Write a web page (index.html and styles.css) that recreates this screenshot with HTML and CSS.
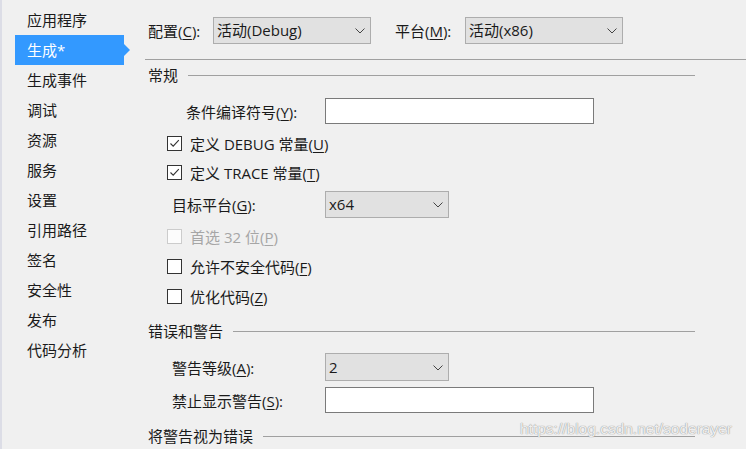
FILE: index.html
```html
<!DOCTYPE html>
<html>
<head>
<meta charset="utf-8">
<link rel="stylesheet" href="styles.css">
</head>
<body>
<div class="page">
  <nav class="side">
    <div class="item">应用程序</div>
    <div class="item sel">生成*</div>
    <div class="item">生成事件</div>
    <div class="item">调试</div>
    <div class="item">资源</div>
    <div class="item">服务</div>
    <div class="item">设置</div>
    <div class="item">引用路径</div>
    <div class="item">签名</div>
    <div class="item">安全性</div>
    <div class="item">发布</div>
    <div class="item">代码分析</div>
  </nav>
  <main class="main">
    <div class="toprow">
      <span class="lbl">配置(<u>C</u>):</span>
      <div class="combo wide"><span>活动(Debug)</span><svg class="chev" width="10" height="6" viewBox="0 0 10 6"><path d="M0.5 0.5 L5 5 L9.5 0.5" fill="none" stroke="#444" stroke-width="1"/></svg></div>
      <span class="lbl lbl2">平台(<u>M</u>):</span>
      <div class="combo wide"><span>活动(x86)</span><svg class="chev" width="10" height="6" viewBox="0 0 10 6"><path d="M0.5 0.5 L5 5 L9.5 0.5" fill="none" stroke="#444" stroke-width="1"/></svg></div>
    </div>
    <div class="sep"></div>

    <div class="hdr h1"><span>常规</span><i></i></div>

    <div class="row r-sym">
      <span class="flbl ind">条件编译符号(<u>Y</u>):</span>
      <div class="tbox"></div>
    </div>
    <div class="row chk r-debug">
      <span class="cb on"><svg width="13" height="13" viewBox="0 0 13 13"><path d="M2.5 6.5 L5.2 9.2 L10.8 3.2" fill="none" stroke="#333" stroke-width="1.1"/></svg></span>
      <span>定义 DEBUG 常量(<u>U</u>)</span>
    </div>
    <div class="row chk r-trace">
      <span class="cb on"><svg width="13" height="13" viewBox="0 0 13 13"><path d="M2.5 6.5 L5.2 9.2 L10.8 3.2" fill="none" stroke="#333" stroke-width="1.1"/></svg></span>
      <span>定义 TRACE 常量(<u>T</u>)</span>
    </div>
    <div class="row r-target">
      <span class="flbl">目标平台(<u>G</u>):</span>
      <div class="combo narrow"><span>x64</span><svg class="chev" width="10" height="6" viewBox="0 0 10 6"><path d="M0.5 0.5 L5 5 L9.5 0.5" fill="none" stroke="#444" stroke-width="1"/></svg></div>
    </div>
    <div class="row chk dis r-pref">
      <span class="cb"></span>
      <span>首选 32 位(<u>P</u>)</span>
    </div>
    <div class="row chk r-unsafe">
      <span class="cb"></span>
      <span>允许不安全代码(<u>F</u>)</span>
    </div>
    <div class="row chk r-opt">
      <span class="cb"></span>
      <span>优化代码(<u>Z</u>)</span>
    </div>

    <div class="hdr h2"><span>错误和警告</span><i></i></div>

    <div class="row r-level">
      <span class="flbl">警告等级(<u>A</u>):</span>
      <div class="combo narrow"><span>2</span><svg class="chev" width="10" height="6" viewBox="0 0 10 6"><path d="M0.5 0.5 L5 5 L9.5 0.5" fill="none" stroke="#444" stroke-width="1"/></svg></div>
    </div>
    <div class="row r-suppress">
      <span class="flbl">禁止显示警告(<u>S</u>):</span>
      <div class="tbox"></div>
    </div>

    <div class="hdr h3"><span>将警告视为错误</span><i></i></div>
  </main>
</div>
<div class="watermark">https://blog.csdn.net/soderayer</div>
</body>
</html>
```
FILE: styles.css
```css
html, body {
  margin: 0;
  padding: 0;
}
body {
  background: #f0f0f0;
  width: 746px;
  height: 449px;
  overflow: hidden;
  font-family: "Open Sans", "Noto Sans CJK SC", "Noto Sans", sans-serif;
  font-size: 15px;
  color: #1a1a1a;
  position: relative;
}
u {
  text-decoration: underline;
  text-underline-offset: 2px;
  text-decoration-thickness: 1px;
}
.page {
  display: flex;
  height: 449px;
}
.side {
  width: 145px;
  flex: none;
  border-left: 2px solid #dcdde6;
  padding-top: 5px;
  box-sizing: border-box;
}
.item {
  margin-left: 13px;
  width: 109px;
  height: 30px;
  line-height: 30px;
  padding-left: 12px;
  box-sizing: border-box;
  position: relative;
  white-space: nowrap;
}
.item.sel {
  background: #3399ff;
  color: #fff;
}
.item.sel::after {
  content: "";
  position: absolute;
  left: 109px;
  top: 9px;
  border-top: 6px solid transparent;
  border-bottom: 6px solid transparent;
  border-left: 6px solid #3399ff;
}
.main {
  flex: 1;
  display: flex;
  flex-direction: column;
}
.toprow {
  display: flex;
  align-items: center;
  margin-top: 17px;
  height: 27px;
  padding-left: 3px;
}
.lbl {
  width: 65px;
  white-space: nowrap;
}
.lbl2 {
  margin-left: 24px;
  width: 70px;
}
.combo {
  height: 27px;
  box-sizing: border-box;
  background: #e1e1e1;
  border: 1px solid #adadad;
  display: flex;
  align-items: center;
  justify-content: space-between;
  padding: 0 5px 0 3px;
}
.combo span {
  line-height: 25px;
}
.chev {
  display: block;
  margin-top: 1px;
}
.wide {
  width: 158px;
}
.narrow {
  width: 124px;
}
.sep {
  margin-top: 15px;
  height: 1px;
  background: #a0a0a0;
}
.hdr {
  display: flex;
  align-items: center;
  height: 20px;
  padding-left: 3px;
  margin-right: 51px;
}
.hdr span {
  line-height: 20px;
  white-space: nowrap;
}
.hdr i {
  flex: 1;
  height: 1px;
  background: #a0a0a0;
  margin-left: 10px;
}
.h1 { margin-top: 5px; }
.h2 { margin-top: 11px; }
.h3 { margin-top: 13px; }
.row {
  display: flex;
  align-items: center;
  white-space: nowrap;
}
.flbl {
  width: 180px;
  padding-left: 27px;
  box-sizing: border-box;
}
.flbl.ind {
  padding-left: 41px;
}
.tbox {
  width: 269px;
  height: 26px;
  box-sizing: border-box;
  background: #fff;
  border: 1px solid #7a7a7a;
}
.chk {
  height: 28px;
  padding-left: 22px;
}
.cb {
  width: 15px;
  height: 15px;
  box-sizing: border-box;
  border: 1px solid #333;
  background: #fff;
  margin-right: 8px;
  display: flex;
  align-items: center;
  justify-content: center;
  flex: none;
}
.cb svg { display: block; }
.dis { color: #a6a6a6; }
.dis .cb { border-color: #cccccc; background: #fcfcfc; }
.r-sym { margin-top: 13px; height: 26px; }
.r-debug { margin-top: 5px; }
.r-trace { margin-top: 1px; }
.r-target { margin-top: 5px; height: 27px; }
.r-target .combo { height: 27px; }
.r-pref { margin-top: 4px; }
.r-unsafe { margin-top: 2px; }
.r-opt { margin-top: 2px; }
.r-level { margin-top: 12px; height: 28px; }
.r-level .combo { height: 28px; }
.r-suppress { margin-top: 6px; height: 26px; }
.watermark {
  position: absolute;
  left: 520px;
  top: 420px;
  font-family: "Liberation Sans", Arial, sans-serif;
  font-size: 15.5px;
  color: rgba(255, 255, 255, 0.85);
  text-shadow: 0 0 1px #9a9a9a, 0 0 1px #9a9a9a;
  white-space: nowrap;
}
```
